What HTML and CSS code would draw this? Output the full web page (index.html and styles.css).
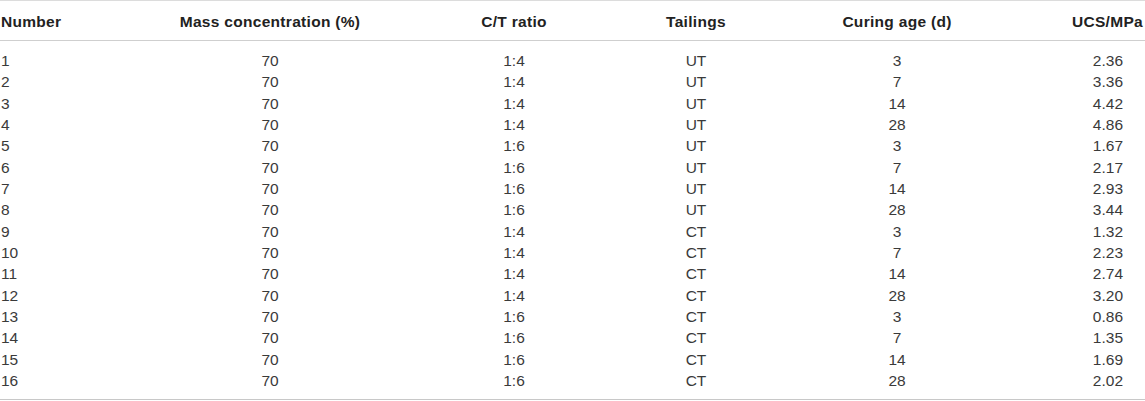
FILE: index.html
```html
<!DOCTYPE html>
<html lang="en">
<head>
<meta charset="utf-8">
<title>Table</title>
<link rel="stylesheet" href="styles.css">
</head>
<body>
<table class="data">
  <colgroup>
    <col class="c1"><col class="c2"><col class="c3"><col class="c4"><col class="c5"><col class="c6">
  </colgroup>
  <thead>
    <tr>
      <th class="left">Number</th>
      <th>Mass concentration (%)</th>
      <th>C/T ratio</th>
      <th>Tailings</th>
      <th>Curing age (d)</th>
      <th class="right">UCS/MPa</th>
    </tr>
  </thead>
  <tbody>
    <tr><td class="left">1</td><td>70</td><td>1:4</td><td>UT</td><td>3</td><td class="right">2.36</td></tr>
    <tr><td class="left">2</td><td>70</td><td>1:4</td><td>UT</td><td>7</td><td class="right">3.36</td></tr>
    <tr><td class="left">3</td><td>70</td><td>1:4</td><td>UT</td><td>14</td><td class="right">4.42</td></tr>
    <tr><td class="left">4</td><td>70</td><td>1:4</td><td>UT</td><td>28</td><td class="right">4.86</td></tr>
    <tr><td class="left">5</td><td>70</td><td>1:6</td><td>UT</td><td>3</td><td class="right">1.67</td></tr>
    <tr><td class="left">6</td><td>70</td><td>1:6</td><td>UT</td><td>7</td><td class="right">2.17</td></tr>
    <tr><td class="left">7</td><td>70</td><td>1:6</td><td>UT</td><td>14</td><td class="right">2.93</td></tr>
    <tr><td class="left">8</td><td>70</td><td>1:6</td><td>UT</td><td>28</td><td class="right">3.44</td></tr>
    <tr><td class="left">9</td><td>70</td><td>1:4</td><td>CT</td><td>3</td><td class="right">1.32</td></tr>
    <tr><td class="left">10</td><td>70</td><td>1:4</td><td>CT</td><td>7</td><td class="right">2.23</td></tr>
    <tr><td class="left">11</td><td>70</td><td>1:4</td><td>CT</td><td>14</td><td class="right">2.74</td></tr>
    <tr><td class="left">12</td><td>70</td><td>1:4</td><td>CT</td><td>28</td><td class="right">3.20</td></tr>
    <tr><td class="left">13</td><td>70</td><td>1:6</td><td>CT</td><td>3</td><td class="right">0.86</td></tr>
    <tr><td class="left">14</td><td>70</td><td>1:6</td><td>CT</td><td>7</td><td class="right">1.35</td></tr>
    <tr><td class="left">15</td><td>70</td><td>1:6</td><td>CT</td><td>14</td><td class="right">1.69</td></tr>
    <tr><td class="left">16</td><td>70</td><td>1:6</td><td>CT</td><td>28</td><td class="right">2.02</td></tr>
  </tbody>
</table>
</body>
</html>
```

FILE: styles.css
```css
html, body {
  margin: 0;
  padding: 0;
  background: #ffffff;
}

body {
  font-family: "Liberation Sans", Arial, Helvetica, sans-serif;
  color: #3a3a3a;
}

.data {
  width: 1145px;
  border-collapse: collapse;
  table-layout: fixed;
  border-top: 1px solid #dcdcdc;
  border-bottom: 1px solid #c8c8c8;
}

.c1 { width: 170px; }
.c2 { width: 200px; }
.c3 { width: 288px; }
.c4 { width: 76px; }
.c5 { width: 326px; }
.c6 { width: 85px; }

.data th {
  font-size: 15.5px;
  font-weight: bold;
  letter-spacing: 0.3px;
  height: 40px;
  box-sizing: border-box;
  padding: 3px 0 0 0;
  text-align: center;
  vertical-align: middle;
  border-bottom: 1px solid #cfcfcf;
  color: #222222;
  white-space: nowrap;
}

.data td {
  font-size: 15.5px;
  line-height: 21.33px;
  height: 21.33px;
  padding: 0;
  text-align: center;
  vertical-align: middle;
  white-space: nowrap;
}

.data tbody tr:first-child td {
  padding-top: 9px;
}

.data tbody tr:last-child td {
  padding-bottom: 8px;
}

.data .left {
  text-align: left;
  padding-left: 1px;
}

.data th.right {
  text-align: right;
  padding-right: 2px;
}

.data td.right {
  text-align: right;
  padding-right: 22px;
}
```
